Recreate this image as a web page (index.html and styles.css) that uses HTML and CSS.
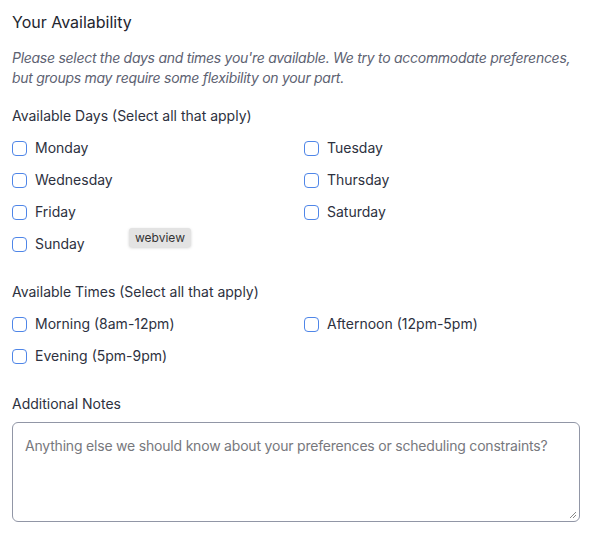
FILE: index.html
```html
<!DOCTYPE html>
<html>
<head>
<meta charset="utf-8">
<link rel="stylesheet" href="styles.css">
</head>
<body>
<div class="form">
  <h2 class="title">Your Availability</h2>
  <p class="intro">Please select the days and times you're available. We try to accommodate preferences, but groups may require some flexibility on your part.</p>

  <div class="group">
    <div class="label">Available Days (Select all that apply)</div>
    <div class="grid">
      <label class="opt"><span class="box"></span>Monday</label>
      <label class="opt"><span class="box"></span>Tuesday</label>
      <label class="opt"><span class="box"></span>Wednesday</label>
      <label class="opt"><span class="box"></span>Thursday</label>
      <label class="opt"><span class="box"></span>Friday</label>
      <label class="opt"><span class="box"></span>Saturday</label>
      <label class="opt sunday"><span class="box"></span>Sunday<span class="tip">webview</span></label>
    </div>
  </div>

  <div class="group">
    <div class="label">Available Times (Select all that apply)</div>
    <div class="grid">
      <label class="opt"><span class="box"></span>Morning (8am-12pm)</label>
      <label class="opt"><span class="box"></span>Afternoon (12pm-5pm)</label>
      <label class="opt"><span class="box"></span>Evening (5pm-9pm)</label>
    </div>
  </div>

  <div class="group">
    <div class="label">Additional Notes</div>
    <div class="textarea"><span class="placeholder">Anything else we should know about your preferences or scheduling constraints?</span>
      <svg class="grip" width="8" height="8" viewBox="0 0 8 8"><path d="M7 1 L1 7 M7 4 L4 7" stroke="#888" stroke-width="1" fill="none"/></svg>
    </div>
  </div>
</div>
</body>
</html>
```

FILE: styles.css
```css
* { box-sizing: border-box; }
body {
  margin: 0;
  background: #ffffff;
  font-family: Inter, "Noto Sans", sans-serif;
  color: #2d3140;
}
.form {
  padding: 10px 24px 12px 12px;
}
.title {
  margin: 0;
  font-size: 16px;
  font-weight: 400;
  line-height: 24px;
  color: #23262f;
}
.intro {
  margin: 14px 0 0 0;
  font-size: 14px;
  line-height: 20px;
  font-style: italic;
  letter-spacing: -0.28px;
  color: #5d6272;
}
.group {
  margin-top: 28px;
}
.intro + .group {
  margin-top: 18px;
}
.label {
  font-size: 14px;
  line-height: 20px;
  color: #2d3140;
}
.grid {
  margin-top: 12px;
  display: grid;
  grid-template-columns: 1fr 1fr;
  column-gap: 16px;
  row-gap: 12px;
}
.opt {
  display: flex;
  align-items: center;
  gap: 8px;
  font-size: 14px;
  line-height: 20px;
  color: #2d3140;
  position: relative;
}
.box {
  width: 15px;
  height: 15px;
  border: 1px solid #4f86e8;
  border-radius: 4px;
  background: #fff;
  flex: none;
}
.tip {
  position: absolute;
  left: 117px;
  top: -6px;
  background: #e3e3e3;
  color: #333;
  font-size: 12px;
  line-height: 17px;
  padding: 1px 6px;
  border-radius: 3px;
  box-shadow: 0 1px 3px rgba(0,0,0,0.18);
}
.textarea {
  margin-top: 8px;
  position: relative;
  height: 100px;
  border: 1px solid #9196a6;
  border-radius: 6px;
  padding: 13px 12px;
  font-size: 14px;
  line-height: 20px;
}
.placeholder {
  color: #77787d;
  letter-spacing: -0.2px;
}
.grip {
  position: absolute;
  right: 2px;
  bottom: 2px;
}
```
